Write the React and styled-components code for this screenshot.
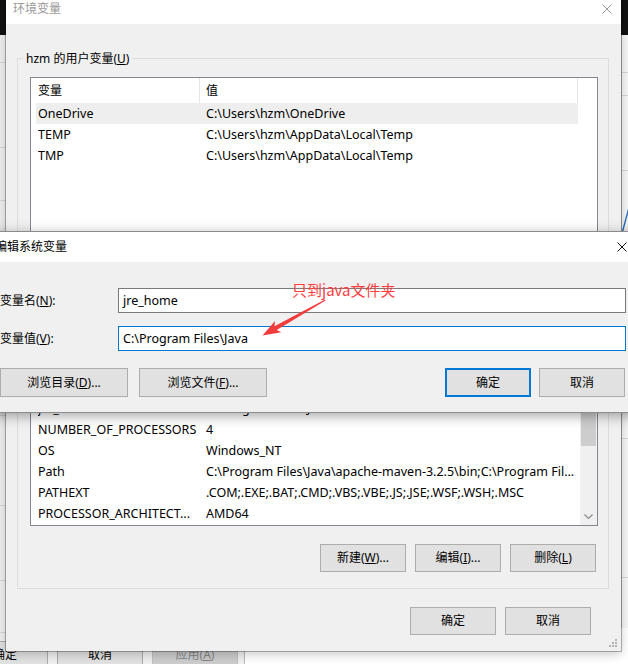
import React from 'react';
import styled, { createGlobalStyle } from 'styled-components';

const UI = `"Noto Sans", "Noto Sans CJK SC", sans-serif`;

const GlobalStyle = createGlobalStyle`
  html, body { margin: 0; padding: 0; background: #fff; }
  body { font-family: ${UI}; font-size: 12px; color: #000; }
  u { text-underline-offset: 1px; }
`;

const Desktop = styled.div`
  position: relative;
  width: 628px;
  height: 664px;
  overflow: hidden;
  background: #fff;
`;

const TopBand = styled.div`
  position: absolute;
  left: 0;
  top: 0;
  width: 628px;
  height: 35px;
  background: #111;
`;

const BgWindow = styled.div`
  position: absolute;
  left: -400px;
  top: 35px;
  width: 645px;
  height: 640px;
  box-sizing: border-box;
  background: #f0f0f0;
  border-right: 1px solid #b8b8b8;
  display: flex;
  flex-direction: column;
`;

const BgRule = styled.div`
  flex-shrink: 0;
  height: 1px;
  margin-top: ${(p) => p.$mt}px;
  background: #d6d6d6;
`;

const BgButtons = styled.div`
  display: flex;
  justify-content: flex-end;
  gap: 9px;
  margin-top: 8px;
  padding-right: 6px;
`;

const BgSide = styled.div`
  position: absolute;
  left: 621px;
  top: 35px;
  width: 20px;
  height: 593px;
  background: #f7f7f7;
  border-left: 1px solid #d0d0d0;
  display: flex;
  flex-direction: column;
`;

const SideChart = styled.svg`
  flex-shrink: 0;
  display: block;
  margin-top: ${(p) => p.$mt}px;
`;

const MainWindow = styled.div`
  position: absolute;
  left: 6px;
  top: -7px;
  width: 615px;
  height: 658px;
  background: #f0f0f0;
  box-shadow: 0 0 0 1px rgba(0, 0, 0, 0.28), 0 3px 10px rgba(0, 0, 0, 0.22);
  display: flex;
  flex-direction: column;
`;

const TitleBar = styled.div`
  flex-shrink: 0;
  height: ${(p) => p.$h}px;
  background: #fff;
  display: flex;
  align-items: center;
  padding-left: ${(p) => p.$pl}px;
`;

const TitleText = styled.div`
  flex: 1;
  font-size: 12px;
  line-height: 16px;
  white-space: nowrap;
  color: ${(p) => (p.$inactive ? '#999999' : '#000')};
`;

const CloseBox = styled.div`
  display: flex;
  margin-right: ${(p) => p.$mr}px;
`;

const MainBody = styled.div`
  flex: 1;
  display: flex;
  flex-direction: column;
  padding: 0 12px 0 11px;
`;

const Group = styled.div`
  margin-top: ${(p) => p.$mt}px;
  border: 1px solid #dcdcdc;
  padding: 0 10px ${(p) => p.$pb}px 12px;
  display: flex;
  flex-direction: column;
`;

const Legend = styled.div`
  align-self: flex-start;
  margin: -9px 0 0 -7px;
  padding: 0 3px;
  height: 17px;
  line-height: 17px;
  background: #f0f0f0;
  white-space: nowrap;
`;

const ListBox = styled.div`
  box-sizing: border-box;
  height: ${(p) => p.$h}px;
  margin-top: 10px;
  border: 1px solid #828790;
  background: #fff;
  display: flex;
  overflow: hidden;
`;

const ListMain = styled.div`
  flex: 1;
  min-width: 0;
  display: flex;
  flex-direction: column;
`;

const Header = styled.div`
  flex-shrink: 0;
  height: 25px;
  display: flex;
`;

const HeaderCell = styled.div`
  box-sizing: border-box;
  width: ${(p) => p.$w}px;
  padding-left: ${(p) => p.$pl}px;
  border-right: 1px solid #e5e5e5;
  line-height: 25px;
  white-space: nowrap;
`;

const Row = styled.div`
  flex-shrink: 0;
  width: 542px;
  height: 21px;
  margin-left: 5px;
  padding-left: 2px;
  box-sizing: border-box;
  display: grid;
  grid-template-columns: 168px 1fr;
  background: ${(p) => (p.$selected ? '#eeeeee' : 'transparent')};
`;

const Cell = styled.div`
  font-size: 12.5px;
  line-height: 21px;
  white-space: nowrap;
  overflow: hidden;
`;

const VScroll = styled.div`
  flex-shrink: 0;
  width: 17px;
  background: #f0f0f0;
  display: flex;
  flex-direction: column;
`;

const ScrollArrow = styled.div`
  flex-shrink: 0;
  height: 17px;
  display: flex;
  align-items: center;
  justify-content: center;
`;

const ScrollTrack = styled.div`
  flex: 1;
`;

const Thumb = styled.div`
  margin: ${(p) => p.$top}px 1px 0 1px;
  height: ${(p) => p.$h}px;
  background: #cdcdcd;
`;

const ButtonRow = styled.div`
  display: flex;
  justify-content: flex-end;
  gap: 9px;
  margin-top: ${(p) => p.$mt}px;
  padding-right: ${(p) => p.$pr}px;
`;

const Button = styled.button`
  box-sizing: border-box;
  flex-shrink: 0;
  width: ${(p) => p.$w || 86}px;
  height: ${(p) => p.$h || 28}px;
  margin: 0;
  padding: 0;
  font-family: ${UI};
  font-size: 12px;
  line-height: 16px;
  color: ${(p) => (p.disabled ? '#838383' : '#000')};
  background: ${(p) => (p.disabled ? '#cccccc' : '#e1e1e1')};
  border: ${(p) =>
    p.$default ? '2px solid #0078d7' : p.disabled ? '1px solid #bfbfbf' : '1px solid #adadad'};
  display: flex;
  align-items: center;
  justify-content: center;
  white-space: nowrap;
`;

const Grip = styled.svg`
  position: absolute;
  right: 3px;
  bottom: 3px;
`;

const Dialog = styled.div`
  position: absolute;
  left: -12px;
  top: 231px;
  width: 658px;
  height: 182px;
  box-sizing: border-box;
  border: 1px solid #8c8c8c;
  background: #f0f0f0;
  box-shadow: 0 3px 12px rgba(0, 0, 0, 0.35);
  display: flex;
  flex-direction: column;
`;

const DialogBody = styled.div`
  display: flex;
  flex-direction: column;
  padding: 26px 19px 15px 11px;
`;

const FieldRow = styled.div`
  display: grid;
  grid-template-columns: 118px 1fr;
  align-items: center;
  margin-top: ${(p) => p.$mt || 0}px;
`;

const Label = styled.div`
  white-space: nowrap;
  line-height: 16px;
`;

const Field = styled.div`
  box-sizing: border-box;
  height: 25px;
  border: 1px solid ${(p) => (p.$focused ? '#0078d7' : '#7a7a7a')};
  background: #fff;
  padding-left: 4px;
  font-size: 12.5px;
  line-height: 23px;
  white-space: nowrap;
`;

const DialogButtons = styled.div`
  display: flex;
  align-items: center;
  margin-top: 17px;
`;

const BtnGroup = styled.div`
  display: flex;
  gap: ${(p) => p.$gap}px;
  margin-left: ${(p) => (p.$end ? 'auto' : '0')};
  margin-right: ${(p) => (p.$end ? 1 : 0)}px;
`;

const Note = styled.div`
  position: absolute;
  left: 292px;
  top: 281px;
  color: #ff3b3b;
  font-family: "Noto Sans CJK SC", "Noto Sans", sans-serif;
  font-size: 15px;
  line-height: 18px;
  white-space: nowrap;
`;

const Arrow = styled.svg`
  position: absolute;
  left: 255px;
  top: 295px;
`;

const userVars = [
  { name: 'OneDrive', value: 'C:\\Users\\hzm\\OneDrive', selected: true },
  { name: 'TEMP', value: 'C:\\Users\\hzm\\AppData\\Local\\Temp' },
  { name: 'TMP', value: 'C:\\Users\\hzm\\AppData\\Local\\Temp' },
];

const systemVars = [
  { name: 'ComSpec', value: 'C:\\WINDOWS\\system32\\cmd.exe' },
  { name: 'JAVA_HOME', value: 'C:\\Program Files\\Java\\jdk1.8.0_131' },
  { name: 'jre_home', value: 'C:\\Program Files\\Java' },
  { name: 'NUMBER_OF_PROCESSORS', value: '4' },
  { name: 'OS', value: 'Windows_NT' },
  { name: 'Path', value: 'C:\\Program Files\\Java\\apache-maven-3.2.5\\bin;C:\\Program Fil...' },
  { name: 'PATHEXT', value: '.COM;.EXE;.BAT;.CMD;.VBS;.VBE;.JS;.JSE;.WSF;.WSH;.MSC' },
  { name: 'PROCESSOR_ARCHITECT...', value: 'AMD64' },
];

const bgRules = [27, 84, 52, 214, 89, 74, 51];
const sideRules = [37, 22, 74];

function CloseIcon({ color }) {
  return (
    <svg width="10" height="10" viewBox="0 0 10 10">
      <path d="M0.5 0.5 L9.5 9.5 M9.5 0.5 L0.5 9.5" stroke={color} strokeWidth="1" fill="none" />
    </svg>
  );
}

function VarList({ vars, height, scroll }) {
  return (
    <ListBox $h={height}>
      <ListMain>
        <Header>
          <HeaderCell $w={169} $pl={7}>变量</HeaderCell>
          <HeaderCell $w={378} $pl={6}>值</HeaderCell>
        </Header>
        {vars.map((v) => (
          <Row key={v.name} $selected={v.selected}>
            <Cell>{v.name}</Cell>
            <Cell>{v.value}</Cell>
          </Row>
        ))}
      </ListMain>
      {scroll && (
        <VScroll>
          <ScrollArrow />
          <ScrollTrack>
            <Thumb $top={65} $h={33} />
          </ScrollTrack>
          <ScrollArrow>
            <svg width="9" height="6" viewBox="0 0 9 6">
              <path d="M0.5 0.5 L4.5 4.5 L8.5 0.5" stroke="#8a8a8a" strokeWidth="1.2" fill="none" />
            </svg>
          </ScrollArrow>
        </VScroll>
      )}
    </ListBox>
  );
}

export default function App() {
  return (
    <>
      <GlobalStyle />
      <Desktop>
        <TopBand />
        <BgWindow>
          {bgRules.map((m, i) => (
            <BgRule key={i} $mt={m} />
          ))}
          <BgButtons>
            <Button>确定</Button>
            <Button>取消</Button>
            <Button disabled>
              应用(<u>A</u>)
            </Button>
          </BgButtons>
        </BgWindow>
        <BgSide>
          {sideRules.map((m, i) => (
            <BgRule key={i} $mt={m} />
          ))}
          <SideChart $mt={34} width="8" height="27" viewBox="0 0 8 27">
            <path d="M0.5 26.5 L7.5 0.5" stroke="#2a6ec8" strokeWidth="1.4" fill="none" />
          </SideChart>
          <BgRule $mt={206} />
          <BgRule $mt={138} />
        </BgSide>

        <MainWindow>
          <TitleBar $h={31} $pl={7}>
            <TitleText $inactive>环境变量</TitleText>
            <CloseBox $mr={9}>
              <CloseIcon color="#9a9a9a" />
            </CloseBox>
          </TitleBar>
          <MainBody>
            <Group $mt={34} $pb={12}>
              <Legend>
                hzm 的用户变量(<u>U</u>)
              </Legend>
              <VarList vars={userVars} height={160} />
              <ButtonRow $mt={10} $pr={2}>
                <Button>
                  新建(<u>N</u>)...
                </Button>
                <Button>
                  编辑(<u>E</u>)...
                </Button>
                <Button>
                  删除(<u>D</u>)
                </Button>
              </ButtonRow>
            </Group>
            <Group $mt={23} $pb={16}>
              <Legend>
                系统变量(<u>S</u>)
              </Legend>
              <VarList vars={systemVars} height={196} scroll />
              <ButtonRow $mt={18} $pr={2}>
                <Button>
                  新建(<u>W</u>)...
                </Button>
                <Button>
                  编辑(<u>I</u>)...
                </Button>
                <Button>
                  删除(<u>L</u>)
                </Button>
              </ButtonRow>
            </Group>
            <ButtonRow $mt={18} $pr={18}>
              <Button>确定</Button>
              <Button>取消</Button>
            </ButtonRow>
          </MainBody>
          <Grip width="9" height="9" viewBox="0 0 9 9">
            <g fill="#b4b4b4">
              <rect x="6" y="0" width="2" height="2" />
              <rect x="3" y="3" width="2" height="2" />
              <rect x="6" y="3" width="2" height="2" />
              <rect x="0" y="6" width="2" height="2" />
              <rect x="3" y="6" width="2" height="2" />
              <rect x="6" y="6" width="2" height="2" />
            </g>
          </Grip>
        </MainWindow>

        <Dialog>
          <TitleBar $h={30} $pl={6}>
            <TitleText>编辑系统变量</TitleText>
            <CloseBox $mr={18}>
              <CloseIcon color="#111" />
            </CloseBox>
          </TitleBar>
          <DialogBody>
            <FieldRow>
              <Label>
                变量名(<u>N</u>):
              </Label>
              <Field>jre_home</Field>
            </FieldRow>
            <FieldRow $mt={13}>
              <Label>
                变量值(<u>V</u>):
              </Label>
              <Field $focused>C:\Program Files\Java</Field>
            </FieldRow>
            <DialogButtons>
              <BtnGroup $gap={11}>
                <Button $w={128} $h={29}>
                  浏览目录(<u>D</u>)...
                </Button>
                <Button $w={128} $h={29}>
                  浏览文件(<u>F</u>)...
                </Button>
              </BtnGroup>
              <BtnGroup $gap={8} $end>
                <Button $w={86} $h={29} $default>
                  确定
                </Button>
                <Button $w={86} $h={29}>
                  取消
                </Button>
              </BtnGroup>
            </DialogButtons>
          </DialogBody>
        </Dialog>

        <Note>只到java文件夹</Note>
        <Arrow width="75" height="45" viewBox="255 295 75 45">
          <polygon
            points="262.5,335.5 275,321 274.5,326.2 325.1,299.6 325.6,300.4 276.7,330 281.4,332.3"
            fill="#f23c3c"
          />
        </Arrow>
      </Desktop>
    </>
  );
}
